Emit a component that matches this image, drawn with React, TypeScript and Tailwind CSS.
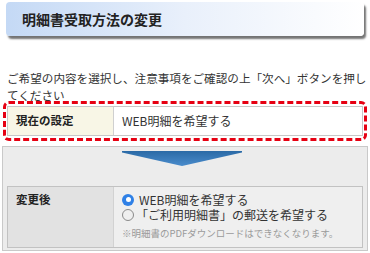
export default function App() {
  return (
    <div className="relative h-[253px] w-[370px] overflow-hidden bg-white font-['Noto_Sans_CJK_JP',sans-serif] text-[#333]">
      <div className="mx-[6px] mt-[2px] flex h-[34px] items-center rounded-[4px] bg-gradient-to-r from-[#c4d9f5] via-[#e9f0fb] to-white pl-[16px] shadow-[2px_3px_2px_rgba(0,0,0,0.55)]">
        <h1 className="text-[14px] font-bold text-[#222]">明細書受取方法の変更</h1>
      </div>

      <p className="mt-[34px] pl-[7px] text-[11.6px] leading-[17px]">
        <span className="block whitespace-nowrap">ご希望の内容を選択し、注意事項をご確認の上「次へ」ボタンを押し</span>
        <span className="block">てください</span>
      </p>

      <div className="mx-[3px] mt-[-3px] rounded-[6px] border-[3px] border-dashed border-[#e60012] px-px py-[2px]">
        <div className="flex h-[30px] border border-[#c8c8c8] text-[11.5px]">
          <div className="flex w-[106px] items-center border-r border-[#d0d0d0] bg-[#f8f6e6] pl-[8px] font-bold text-[#222]">
            現在の設定
          </div>
          <div className="flex flex-1 items-center bg-white pl-[8px] text-[12px]">WEB明細を希望する</div>
        </div>
      </div>

      <div className="mx-[2px] mt-[5px] border border-[#c9c9c9] bg-[#ececec] px-[4px] pb-[2px] pt-[4px]">
        <div className="flex justify-center pr-[6px]">
          <svg width="120" height="15" viewBox="0 0 120 15">
            <defs>
              <linearGradient id="arr" x1="0" y1="0" x2="0" y2="1">
                <stop offset="0" stopColor="#2b6aa6" />
                <stop offset="1" stopColor="#4a8ccc" />
              </linearGradient>
            </defs>
            <polygon points="0,0 120,0 120,1.5 60,15 0,1.5" fill="url(#arr)" />
          </svg>
        </div>

        <div className="mt-[20px] flex h-[62px] border border-[#c2c2c2]">
          <div className="w-[106px] border-r border-[#d2d2d2] bg-[#e2e2e2] pl-[8px] pt-[4px] text-[11.5px] font-bold text-[#222]">
            変更後
          </div>
          <div className="flex-1 bg-[#efefef] pl-[8px] pt-[5px] text-[12px] leading-[15px]">
            <label className="flex h-[15px] items-center gap-[5px]">
              <span className="flex h-[12px] w-[12px] items-center justify-center rounded-full bg-[#2f80e6]">
                <span className="h-[5px] w-[5px] rounded-full bg-white" />
              </span>
              WEB明細を希望する
            </label>
            <label className="flex h-[15px] items-center gap-[2px]">
              <span className="h-[12px] w-[12px] rounded-full border border-[#8a8a8a]" />
              「ご利用明細書」の郵送を希望する
            </label>
            <p className="mt-[5px] text-[9.5px] leading-[13px] text-[#9a9a9a]">※明細書のPDFダウンロードはできなくなります。</p>
          </div>
        </div>
      </div>
    </div>
  );
}
